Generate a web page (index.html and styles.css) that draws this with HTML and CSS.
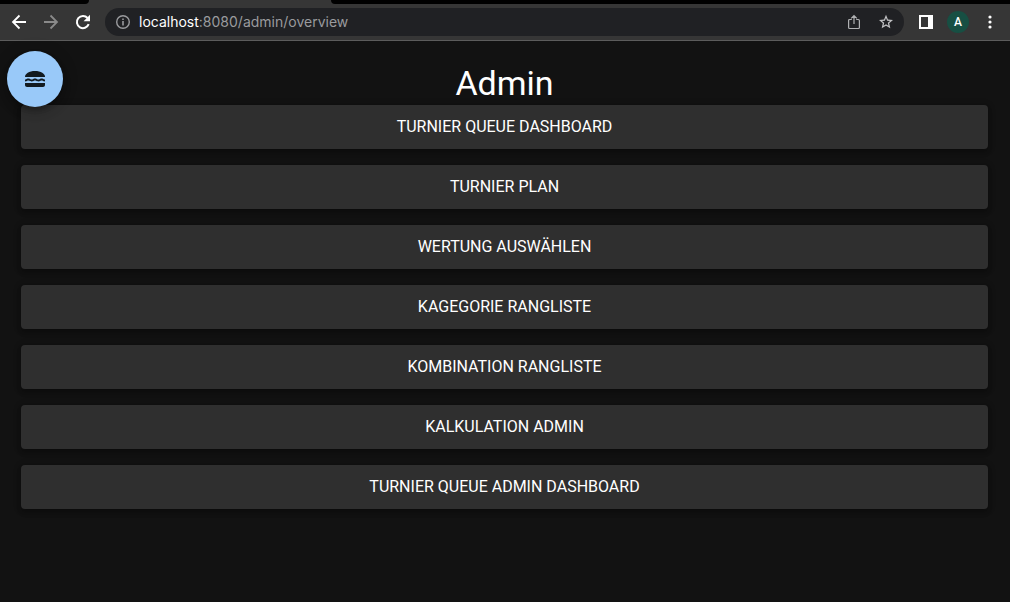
FILE: index.html
```html
<!DOCTYPE html>
<html lang="de">
<head>
<meta charset="utf-8">
<meta name="viewport" content="width=device-width, initial-scale=1">
<title>Admin</title>
<link rel="stylesheet" href="styles.css">
</head>
<body>
<header class="browser">
  <div class="tabstrip">
    <div class="tab tab-before"></div>
    <div class="tab-active"></div>
    <div class="tab tab-after"></div>
  </div>
  <div class="toolbar">
    <button class="tool" type="button" aria-label="Back">
      <svg width="16" height="16" viewBox="0 0 16 16" fill="none" stroke="#fff" stroke-width="1.800"><path d="M15 8H2.500M8.500 1.500L2 8l6.500 6.500"/></svg>
    </button>
    <button class="tool" type="button" aria-label="Forward">
      <svg width="16" height="16" viewBox="0 0 16 16" fill="none" stroke="#8a8a8a" stroke-width="1.800"><path d="M1 8h12.500M7.500 1.500L14 8l-6.500 6.500"/></svg>
    </button>
    <button class="tool" type="button" aria-label="Reload">
      <svg width="16" height="16" viewBox="0 0 16 16"><path fill="none" stroke="#fff" stroke-width="2" d="M13.700 10.200A6.100 6.100 0 1 1 12.600 4"/><path fill="#fff" d="M15 .8v6.400H8.600z"/></svg>
    </button>
    <div class="address">
      <svg class="info" width="14" height="14" viewBox="0 0 14 14"><circle cx="7" cy="7" r="6.300" fill="none" stroke="#9a9b9e" stroke-width="1.400"/><path fill="#9a9b9e" d="M6.200 6h1.600v4.500H6.200zM6.200 3.400h1.600V5H6.200z"/></svg>
      <div class="url"><span class="host">localhost</span>:8080/admin/overview</div>
      <button class="tool" type="button" aria-label="Share">
        <svg width="12" height="16" viewBox="0 0 12 16" fill="none" stroke="#b0b1b3" stroke-width="1.200"><path d="M3.800 5.500H1.600A1 1 0 0 0 .6 6.500v7A1 1 0 0 0 1.600 14.500h8.800a1 1 0 0 0 1-1v-7a1 1 0 0 0-1-1H8.200M6 10V1.800M3.200 4.300L6 1.500l2.800 2.800"/></svg>
      </button>
      <button class="tool" type="button" aria-label="Bookmark">
        <svg width="16" height="16" viewBox="0 0 24 24" fill="#c0c1c3"><path d="M22.500 9l-7.600-.7L12 1.300 9.100 8.300 1.500 9l5.700 5L5.500 21.500l6.500-4 6.500 4L16.800 14zM12 15.200l-3.700 2.300 1-4.300L6 10.400l4.300-.4L12 6l1.700 4 4.300.4-3.300 2.800 1 4.300z"/></svg>
      </button>
    </div>
    <button class="tool" type="button" aria-label="Side panel">
      <svg width="14" height="14" viewBox="0 0 14 14"><path fill="#fff" fill-rule="evenodd" d="M0 0h14v14H0zM2 2v10h7V2z"/></svg>
    </button>
    <button class="avatar" type="button">A</button>
    <button class="tool" type="button" aria-label="Menu">
      <svg width="4" height="14" viewBox="0 0 4 14" fill="#fff"><circle cx="2" cy="2" r="1.600"/><circle cx="2" cy="7" r="1.600"/><circle cx="2" cy="12" r="1.600"/></svg>
    </button>
  </div>
</header>
<main class="page">
  <button class="fab" type="button" aria-label="Navigation">
    <svg width="24" height="24" viewBox="0 0 24 24" fill="#121a20"><path d="M22 10c.32-3.280-4.280-6-9.990-6C6.300 4 1.700 6.720 2.020 10H22z"/><path d="M2 16v2c0 1.100.9 2 2 2h16c1.100 0 2-.9 2-2v-2H2z"/><path d="M5.350 13.500c.55 0 .78.140 1.150.360.450.270 1.070.640 2.180.640s1.730-.370 2.180-.640c.37-.230.590-.360 1.150-.360.550 0 .780.140 1.150.360.450.270 1.070.640 2.180.640s1.730-.370 2.180-.640c.37-.230.590-.360 1.150-.360.550 0 .780.140 1.150.360.450.270 1.060.630 2.160.640v-1.980c-.54 0-.780-.150-1.150-.380-.450-.270-1.070-.640-2.180-.640s-1.730.37-2.180.640c-.37.230-.600.360-1.150.360s-.780-.140-1.150-.360c-.450-.270-1.070-.640-2.180-.640s-1.730.37-2.180.640c-.37.230-.590.360-1.150.360s-.780-.140-1.150-.360c-.450-.270-1.070-.640-2.180-.640s-1.730.37-2.180.640c-.37.230-.590.360-1.150.360v2c1.110 0 1.730-.370 2.180-.640.370-.230.600-.360 1.150-.360z"/></svg>
  </button>
  <h1 class="title">Admin</h1>
  <nav class="links">
    <button class="link" type="button">Turnier Queue Dashboard</button>
    <button class="link" type="button">Turnier Plan</button>
    <button class="link" type="button">Wertung auswählen</button>
    <button class="link" type="button">Kagegorie Rangliste</button>
    <button class="link" type="button">Kombination Rangliste</button>
    <button class="link" type="button">Kalkulation Admin</button>
    <button class="link" type="button">Turnier Queue Admin Dashboard</button>
  </nav>
</main>
</body>
</html>
```
FILE: styles.css
```css
* {
  box-sizing: border-box;
}

body {
  margin: 0;
  min-height: 100vh;
  background: #121212;
  color: #fff;
  font-family: Roboto, sans-serif;
}

button {
  border: 0;
  padding: 0;
  background: none;
  color: inherit;
  font-family: inherit;
  cursor: pointer;
}

.browser {
  background: #363636;
  border-bottom: 1px solid #5c5c5c;
}

.tabstrip {
  display: flex;
  height: 4px;
}

.tab {
  background: #000;
}

.tab-before {
  width: 89px;
  border-bottom-right-radius: 4px;
}

.tab-active {
  width: 242px;
}

.tab-after {
  flex: 1;
  border-bottom-left-radius: 4px;
}

.toolbar {
  display: flex;
  align-items: center;
  height: 36px;
  padding: 0 4px 0 3px;
}

.tool {
  display: flex;
  align-items: center;
  justify-content: center;
  width: 32px;
  height: 28px;
}

.address {
  display: flex;
  flex: 1;
  align-items: center;
  height: 28px;
  margin: 0 6px;
  padding: 0 2px 0 11px;
  border-radius: 14px;
  background: #202124;
}

.url {
  flex: 1;
  margin-left: 9px;
  color: #9a9b9e;
  font-family: Inter, sans-serif;
  font-size: 14px;
  line-height: 20px;
}

.host {
  color: #fff;
}

.avatar {
  width: 22px;
  height: 22px;
  margin: 0 5px;
  border-radius: 50%;
  background: #174f43;
  font-size: 12px;
  font-weight: 500;
}

.page {
  position: relative;
  padding: 22px 22px 24px 21px;
}

.fab {
  position: absolute;
  top: 10px;
  left: 7px;
  display: flex;
  align-items: center;
  justify-content: center;
  width: 56px;
  height: 56px;
  border-radius: 50%;
  background: #99c9f9;
  box-shadow: 0 3px 5px rgba(0, 0, 0, 0.2), 0 6px 10px rgba(0, 0, 0, 0.14), 0 1px 18px rgba(0, 0, 0, 0.12);
}

.title {
  margin: 0;
  padding-bottom: 2px;
  font-size: 34px;
  font-weight: 400;
  line-height: 40px;
  text-align: center;
}

.links {
  display: flex;
  flex-direction: column;
  gap: 16px;
}

.link {
  padding: 10px 16px;
  border-radius: 4px;
  background: #2f2f2f;
  box-shadow: 0 2px 4px rgba(0, 0, 0, 0.2), 0 4px 5px rgba(0, 0, 0, 0.14), 0 1px 10px rgba(0, 0, 0, 0.12);
  font-size: 16px;
  line-height: 24px;
  text-transform: uppercase;
}
```
